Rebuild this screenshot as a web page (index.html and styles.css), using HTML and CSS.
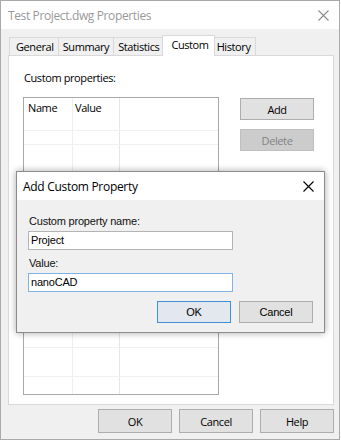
FILE: index.html
```html
<!DOCTYPE html>
<html>
<head>
<meta charset="utf-8">
<link rel="stylesheet" href="styles.css">
</head>
<body>
<div class="window">
  <div class="titlebar">
    <span class="title">Test Project.dwg Properties</span>
    <svg class="close close-inactive" width="11" height="11" viewBox="0 0 11 11"><path d="M0.5 0.5 L10.5 10.5 M10.5 0.5 L0.5 10.5" stroke="#8a8a8a" stroke-width="1.1" fill="none"/></svg>
  </div>
  <div class="body">
    <div class="tabs">
      <div class="tab">General</div>
      <div class="tab">Summary</div>
      <div class="tab">Statistics</div>
      <div class="tab active">Custom</div>
      <div class="tab">History</div>
    </div>
    <div class="panel">
      <div class="panel-label">Custom properties:</div>
      <div class="panel-row">
        <div class="list">
          <div class="list-head">
            <span class="col col-name">Name</span>
            <span class="col col-value">Value</span>
          </div>
          <div class="list-body"></div>
        </div>
        <div class="side-buttons">
          <button class="btn">Add</button>
          <button class="btn disabled">Delete</button>
        </div>
      </div>
    </div>
    <div class="footer">
      <button class="btn fbtn">OK</button>
      <button class="btn fbtn">Cancel</button>
      <button class="btn fbtn">Help</button>
    </div>
  </div>

  <div class="modal">
    <div class="modal-title">
      <span class="mtitle">Add Custom Property</span>
      <svg class="close" width="11" height="11" viewBox="0 0 11 11"><path d="M0.5 0.5 L10.5 10.5 M10.5 0.5 L0.5 10.5" stroke="#000" stroke-width="1.1" fill="none"/></svg>
    </div>
    <div class="modal-body">
      <div class="mlabel">Custom property name:</div>
      <div class="input">Project</div>
      <div class="mlabel mlabel2">Value:</div>
      <div class="input focused">nanoCAD</div>
      <div class="modal-buttons">
        <button class="mbtn default">OK</button>
        <button class="mbtn">Cancel</button>
      </div>
    </div>
  </div>
</div>
</body>
</html>
```
FILE: styles.css
```css
* { box-sizing: border-box; }
html, body { margin: 0; padding: 0; background: #ffffff; }
body { font-family: "Open Sans", "Noto Sans", sans-serif; font-size: 11px; letter-spacing: -0.4px; color: #000; }

.window {
  position: relative;
  width: 340px;
  height: 440px;
  border: 1px solid #aaaaaa;
  background: #f0f0f0;
  display: flex;
  flex-direction: column;
}

.titlebar {
  height: 28px;
  background: #fff;
  display: flex;
  align-items: center;
  justify-content: space-between;
  padding: 0 10px 0 7px;
}
.title { color: #999; font-size: 12px; letter-spacing: -0.37px; }
.close { display: block; }

.body {
  flex: 1;
  display: flex;
  flex-direction: column;
  padding: 6px 5px 0 7px;
}

.tabs {
  display: flex;
  align-items: flex-end;
  height: 20px;
  padding-left: 1px;
  position: relative;
  z-index: 2;
}
.tab {
  height: 18px;
  line-height: 17px;
  padding: 0 4px;
  border: 1px solid #d9d9d9;
  border-bottom: none;
  background: #f0f0f0;
  margin-left: -1px;
}
.tab:first-child { margin-left: 0; padding-left: 6px; }
.tab.active {
  height: 21px;
  line-height: 17px;
  background: #fff;
  margin-left: -2px;
  margin-right: -2px;
  margin-bottom: -1px;
  padding: 0 5px 0 8px;
  position: relative;
  z-index: 3;
}

.panel {
  height: 350px;
  background: #fff;
  border: 1px solid #d9d9d9;
  padding: 14px 0 0 14px;
  position: relative;
  z-index: 1;
}
.panel-label { line-height: 16px; padding-left: 1px; }
.panel-row { display: flex; margin-top: 11px; }

.list {
  width: 196px;
  height: 298px;
  border: 1px solid #a9a9a9;
  background:
    linear-gradient(to right, transparent 48px, #efefef 48px, #efefef 49px, transparent 49px),
    linear-gradient(to right, transparent 95px, #e6e6e6 95px, #e6e6e6 96px, transparent 96px),
    #fff;
  display: flex;
  flex-direction: column;
}
.list-head { height: 18px; display: flex; align-items: center; }
.col-name { width: 48px; padding-left: 4px; }
.col-value { padding-left: 3px; }
.list-body {
  flex: 1;
  background: repeating-linear-gradient(to bottom, transparent 0, transparent 13.5px, #f1f1f1 13.5px, #f1f1f1 14.5px);
}

.side-buttons {
  display: flex;
  flex-direction: column;
  gap: 9px;
  margin-left: 21px;
  margin-top: 1px;
}
.btn {
  font-family: inherit;
  font-size: 11px;
  letter-spacing: -0.4px;
  color: #000;
  width: 74px;
  height: 22px;
  padding: 0;
  background: #e1e1e1;
  border: 1px solid #adadad;
}
.btn.disabled { background: #cccccc; border-color: #bfbfbf; color: #838383; }

.footer {
  display: flex;
  justify-content: flex-end;
  gap: 7px;
  margin-top: 4px;
}
.fbtn { height: 24px; }

.modal {
  position: absolute;
  left: 15px;
  top: 170px;
  width: 309px;
  height: 162px;
  border: 1px solid #8c8c8c;
  background: #f0f0f0;
  box-shadow: 0 0 7px rgba(0,0,0,0.35);
  z-index: 10;
  display: flex;
  flex-direction: column;
  font-family: "Liberation Sans", Arial, sans-serif;
  font-size: 11px;
  letter-spacing: -0.2px;
}
.modal-title {
  height: 28px;
  background: #fff;
  display: flex;
  align-items: center;
  justify-content: space-between;
  padding: 0 10px 0 6px;
  font-family: "Open Sans", "Noto Sans", sans-serif;
}
.mtitle { font-size: 12px; letter-spacing: -0.3px; }
.modal-body { flex: 1; padding: 14px 11px 0 11px; display: flex; flex-direction: column; }
.mlabel { line-height: 14px; padding-left: 1px; color: #111; }
.mlabel2 { margin-top: 6px; }
.input {
  width: 205px;
  height: 19px;
  margin-top: 3px;
  background: #fff;
  border: 1px solid #b4b4b4;
  line-height: 17px;
  padding-left: 2px;
}
.input.focused { border-color: #7fb4e6; }
.modal-buttons {
  display: flex;
  justify-content: flex-end;
  gap: 8px;
  margin-top: 9px;
}
.mbtn {
  font-family: "Liberation Sans", Arial, sans-serif;
  font-size: 11px;
  letter-spacing: -0.2px;
  color: #000;
  width: 74px;
  height: 22px;
  padding: 0;
  background: #e1e1e1;
  border: 1px solid #adadad;
}
.mbtn.default { border-color: #3d8fd6; background: #e3e8ee; }
```
